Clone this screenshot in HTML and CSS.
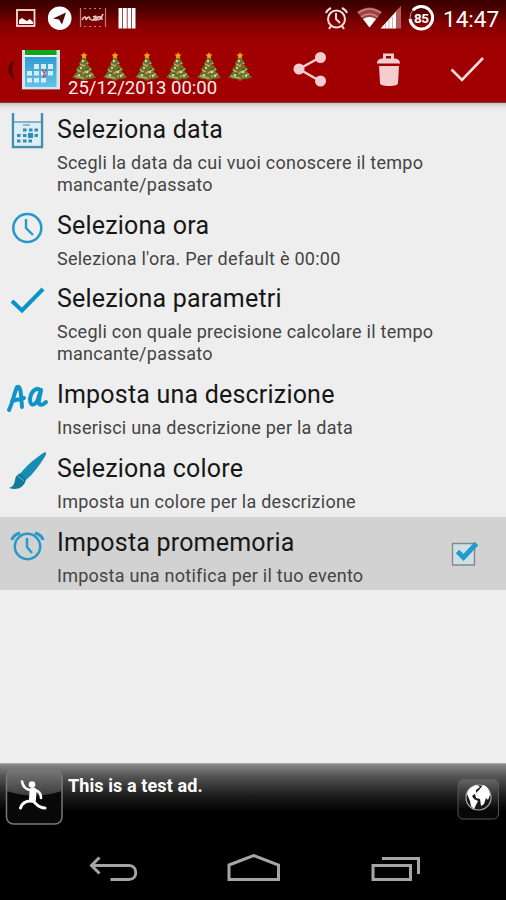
FILE: index.html
```html
<!DOCTYPE html>
<html lang="it">
<head>
<meta charset="utf-8">
<title>Countdown</title>
<link rel="stylesheet" href="styles.css">
</head>
<body>
<svg class="defs" width="0" height="0">
  <defs>
    <linearGradient id="gloss" x1="0" y1="0" x2="0" y2="1"><stop offset="0" stop-color="#777"/><stop offset="1" stop-color="#3c3c3c"/></linearGradient>
    <linearGradient id="dark" x1="0" y1="0" x2="0" y2="1"><stop offset="0" stop-color="#666"/><stop offset=".75" stop-color="#080808"/></linearGradient>
    <linearGradient id="sky" x1="0" y1="0" x2="0" y2="1"><stop offset="0" stop-color="#329bd0"/><stop offset="1" stop-color="#62c3ea"/></linearGradient>
    <symbol id="tree" viewBox="0 0 26 30">
      <path d="M11 24h4v5h-4z" fill="#70451d"/>
      <path d="M13 4L7.500 12l2.500-.5L4.500 18l3-.3L1 25.500c3 .3 5 2 8 1.500 3 1.500 5 1.500 8 0 3 .5 5-1 8-1.500l-6.500-7.800 3 .3-5.500-6.500 2.500.5z" fill="#5f7530"/>
      <path d="M9 12l4 2 4-3M6 18l6 3 8-4M4 24l8 2 10-4" fill="none" stroke="#b9ae5c" stroke-width="1.600"/>
      <path d="M8 16l3 1m4-5l1 1m-9 9l3-1m5-3l3-1m-1 7l3 1" stroke="#304c22" stroke-width="1.300"/>
      <g fill="#e0d28b"><circle cx="12" cy="9" r="1.300"/><circle cx="10" cy="16" r="1.200"/><circle cx="16" cy="20" r="1.300"/><circle cx="8" cy="23" r="1.300"/><circle cx="19" cy="24" r="1.200"/></g>
      <g fill="#b94b22"><circle cx="15" cy="14" r="1.300"/><circle cx="11" cy="20" r="1.200"/><circle cx="14" cy="25" r="1.200"/></g>
      <path d="M13 0l1 2.200 2.500.3-1.800 1.700.5 2.500L13 5.500l-2.200 1.200.5-2.500-1.800-1.700 2.500-.3z" fill="#fca414"/>
    </symbol>
  </defs>
</svg>
<div class="screen">
  <header class="header">
    <div class="status">
      <svg class="left-icons" width="140" height="36" viewBox="0 0 140 36">
        <rect x="17" y="10" width="17.500" height="16" fill="none" stroke="#f4dede" stroke-width="1.800"/>
        <path d="M19 24v-4l3-2 3 2 2 1 3-2 3 3v2z" fill="#fff"/>
        <circle cx="59.700" cy="18.200" r="11.800" fill="#fff"/>
        <path d="M53 18.500l13-6-4 12-3-5z" fill="#4c0d0d"/>
        <path d="M84 8.500h2m3 0h2m3 0h2m3 0h2M84 26.500h2m3 0h2m3 0h2m3 0h2M80.500 8v19M105.500 8v19" fill="none" stroke="#b98080" stroke-width="1.200"/>
        <path d="M82 20c2-4 4-4 4 0 2-4 4-4 4 0m1 0h1m1-3c4-2 4 0 0 3h4m6-6c-2 5-5 7-6 5s5-4 5 1" fill="none" stroke="#ecc9c9" stroke-width="1.600"/>
        <path d="M118.500 8h3.800v20.500h-3.800zm4.500 0h3.800v20.500H123zm4.500 0h3.800v20.500h-3.800zm4.500 0h3.500v20.500H132z" fill="#fff"/>
      </svg>
      <div class="status-right">
        <svg width="112" height="36" viewBox="324 0 112 36">
          <g fill="none" stroke="#f6dddd" stroke-width="2"><circle cx="336.500" cy="19" r="8.500"/><path d="M336 13v6l4 4M326 13c1-3 3-4 5-5m11 0c2 1 4 2 5 5M331 26l-2 3m13-3l2 3"/></g>
          <path d="M357 12c8-6 17-6 25 0l-12.300 15.500z" fill="#9b4444"/>
          <path d="M358 13q11.500-8 23 0M361 17q8.500-6 17 0" fill="none" stroke="#c98585" stroke-width="1.500"/>
          <path d="M363 19q6.700-4 13 0l-6.500 8.500z" fill="#fff"/>
          <path d="M401 6v22.500h-5.500V11.500z" fill="#b46060"/>
          <path d="M380.500 28.500l15.500-17v17z" fill="#fff"/><path d="M385.500 23v6m3.500-9v9m3.500-12v12" stroke="#c88" stroke-width=".7"/>
          <circle cx="421.300" cy="17.700" r="11.300" fill="none" stroke="#d99" stroke-width="1"/>
          <circle cx="421.300" cy="17.700" r="11.300" fill="none" stroke="#fff" stroke-width="3" stroke-dasharray="61 10" transform="rotate(222 421.300 17.700)"/>
          <text class="battery" x="421.300" y="23" text-anchor="middle" fill="#fff">85</text>
        </svg>
        <span class="clock">14:47</span>
      </div>
    </div>
    <div class="actionbar">
      <svg class="app" width="62" height="67" viewBox="0 36 62 67">
        <path d="M14 60c-7 6-7 12 0 19-3-7-3-12 0-19z" fill="#4f0505" stroke="#5b0707"/>
        <path d="M22 50h38v39H22z" fill="#d9e4e8"/><path d="M25 50h31.500v5H25z" fill="#10a51b"/><path d="M25 55h31.500v1.500H25z" fill="#fff"/>
        <path d="M25 57h31.500v30H25z" fill="url(#sky)"/>
        <path d="M34 64h5v5h-5zm7 0h5v5h-5zm7 0h5v5h-5zM27 71h5v4.500h-5zm7 0h5v4.500h-5zm7 0h5v4.500h-5zm7 0h5v4.500h-5zM27 78h5v4.500h-5zm7 0h5v4.500h-5zm7 0h5v4.500h-5z" fill="#d5edf7"/>
        <path d="M42 69l4 8m0-8l-3 9" stroke="#b5525d" stroke-width="1.200"/><path d="M21.500 89.500H60" stroke="#9a6065"/>
      </svg>
      <div class="event">
        <div class="trees">
          <svg><use href="#tree"/></svg><svg><use href="#tree"/></svg><svg><use href="#tree"/></svg><svg><use href="#tree"/></svg><svg><use href="#tree"/></svg><svg><use href="#tree"/></svg>
        </div>
        <div class="date">25/12/2013 00:00</div>
      </div>
      <svg class="actions" width="216" height="67" viewBox="290 36 216 67">
        <g fill="#f3cdd0"><circle cx="299" cy="69" r="5.500"/><circle cx="320.500" cy="57.500" r="5.500"/><circle cx="320.500" cy="81" r="5.500"/></g>
        <path d="M320 57.500L299 69l21 12" fill="none" stroke="#f3cdd0" stroke-width="2.500"/>
        <path d="M383 59v-5.500h11V59h-3v-3h-5v3z" fill="#f3cdd0"/>
        <path d="M377 63.500c0-4 3-5 6-5h11c3 0 6 1 6 5zM379 66h20l-1 17c0 2-3 3-9 3s-9-1-9-3z" fill="#f3cdd0"/>
        <path d="M451.500 69.500L462 80l21-22" fill="none" stroke="#f8dcdc" stroke-width="2.600"/>
      </svg>
    </div>
  </header>

  <main class="list">
    <section class="row">
      <svg class="icon" viewBox="0 0 54 74"><path d="M13 10v34h29V10" fill="none" stroke="#418ead" stroke-width="2.400"/><path d="M14.500 19h26v23.500h-26z" fill="#dceef3"/><path d="M14 19h27" stroke="#418ead" stroke-width="1.200"/><path d="M23 22h7" stroke="#6eaac0" stroke-width="1.500"/><path d="M23 25.500h3.500v3H23zm6 0h3.500v3H29zm5.500 0H38v3h-3.500zM17 31h3.500v3H17zm6 0h3.500v3H23zm5-1h5v5h-5zm6.500 1H38v3h-3.500zM17 36.500h3.500v3H17zm6 0h3.500v3H23zm5.500 0H32v3h-3.500z" fill="#308db3"/></svg>
      <div class="copy"><h2>Seleziona data</h2><p>Scegli la data da cui vuoi conoscere il tempo<br>mancante/passato</p></div>
    </section>
    <section class="row">
      <svg class="icon" viewBox="0 0 54 74"><g fill="none" stroke="#2799c8"><circle cx="27.300" cy="29" r="14" stroke-width="2.600"/><path d="M26 20v9l7 7" stroke-width="2.400"/></g></svg>
      <div class="copy"><h2>Seleziona ora</h2><p>Seleziona l'ora. Per default è 00:00</p></div>
    </section>
    <section class="row">
      <svg class="icon" viewBox="0 0 54 74"><path d="M12 29l10 9.500L43 17" fill="none" stroke="#0994c9" stroke-width="4"/></svg>
      <div class="copy"><h2>Seleziona parametri</h2><p>Scegli con quale precisione calcolare il tempo<br>mancante/passato</p></div>
    </section>
    <section class="row">
      <svg class="icon" viewBox="0 0 54 74"><path d="M9 42C13 34 14 26 17 19c4-2 4 8 5 20M12 33l12-3M41 23c-4-5-10 0-11 8 0 8 5 7 8 0l3-9-2 10c-1 6 3 6 7 2" fill="none" stroke="#1094c8" stroke-width="4" stroke-linecap="round" stroke-linejoin="round"/></svg>
      <div class="copy"><h2>Imposta una descrizione</h2><p>Inserisci una descrizione per la data</p></div>
    </section>
    <section class="row">
      <svg class="icon" viewBox="0 0 54 74"><path d="M45 10c2 1 1 3-1 6-5 8-11 16-18 22l-6-6C27 23 34 17 45 10z" fill="#168db5"/><path d="M20 31l6 6c-1 7-7 12-17 9 5-2 5-4 6-8 1-5 3-5 5-7z" fill="#117b9f"/><path d="M18 34l6 5" stroke="#6fb2c8" stroke-width="1"/></svg>
      <div class="copy"><h2>Seleziona colore</h2><p>Imposta un colore per la descrizione</p></div>
    </section>
    <section class="row selected">
      <svg class="icon" viewBox="0 0 54 74"><g fill="none" stroke="#2799c8"><circle cx="27.500" cy="30.500" r="12.700" stroke-width="2.500"/><path d="M27 22v9l5 6" stroke-width="2.400"/><path d="M12 24c1-4 4-6 8-7m15 0c4 1 7 3 8 7" stroke-width="3"/></g></svg>
      <div class="copy"><h2>Imposta promemoria</h2><p>Imposta una notifica per il tuo evento</p></div>
      <svg class="check" width="30" height="30" viewBox="450 539 30 30"><path d="M452.500 544.500h22v21.500h-22z" fill="#d0dfe5" stroke="#888" stroke-width="1.400"/><path d="M457.500 552.500l6 6L476.500 544.500" fill="none" stroke="#219bcd" stroke-width="4.800"/></svg>
    </section>
  </main>

  <footer class="ad">
    <svg class="runner" width="58" height="58" viewBox="5 768 58 58">
      <rect x="6.500" y="769" width="55.500" height="54" rx="7" fill="#080808"/>
      <path d="M6.500 776q0-7 7-7H55q7 0 7 7v14q-28 9-55.500 0z" fill="url(#gloss)"/>
      <rect x="6.500" y="769" width="55.500" height="54" rx="7" fill="none" stroke="#777" stroke-width="1.500"/>
      <circle cx="32" cy="783.500" r="3.300" fill="#fff"/>
      <g fill="none" stroke="#fff" stroke-linecap="round" stroke-linejoin="round"><path d="M22 780.500c1 5 4 8 8 8.500h5c4 1 6 4 6 8" stroke-width="2.600"/><path d="M33 790l-.5 8" stroke-width="7"/><path d="M31 800c-5 0-9 2-10.500 7M33 800c4 3 5 7 12 7" stroke-width="3"/></g>
    </svg>
    <span>This is a test ad.</span>
    <svg class="globe" width="42" height="42" viewBox="457 778 42 42">
      <rect x="458" y="779" width="40.500" height="40" rx="5" fill="url(#dark)" stroke="#555"/>
      <circle cx="478.500" cy="797.500" r="12.500" fill="#181818" stroke="#aaa" stroke-width="1.200"/>
      <path d="M467 794c1-5 5-8 10-9l3 2-4 3v3l-4 3 2 3 4 2-2 4-2 4-3-3-1-5zM479 790l4-5c4 1 7 5 7 10l-2 5-2-2-2 6-3 2-1-7-4-1-1-4z" fill="#fff"/>
    </svg>
  </footer>
  <nav class="nav">
    <svg width="506" height="70" viewBox="0 830 506 70" fill="none" stroke="#a5a5a5" stroke-width="3">
      <path d="M99.500 857.500L91.500 865.500l8 8M92 865.500h37c9 0 9 14 0 14h-18.500"/>
      <path d="M229 865l24.500-9.500L278.500 865v14.500H229z"/>
      <path d="M373 865.500h37.500v14H373zM382 858.500h36.500V874"/>
    </svg>
  </nav>
</div>
</body>
</html>
```

FILE: styles.css
```css
* { box-sizing: border-box; }
body { margin: 0; background: #000; font-family: Roboto, sans-serif; }
.defs { position: absolute; }
.screen { width: 506px; height: 900px; display: flex; flex-direction: column; overflow: hidden; background: #eee; }
svg { display: block; flex: none; }

.header { height: 103px; flex: none; background: linear-gradient(#370000 0, #500000 10px, #850000 25px, #a00000 42px, #a00000); border-bottom: 1px solid #8b3434; }
.status { height: 36px; display: flex; justify-content: space-between; }
.status-right { display: flex; }
.battery { font: 700 13.5px Roboto, sans-serif; letter-spacing: -.5px; }
.clock { width: 70px; padding-left: 7px; font-size: 22.5px; line-height: 38px; color: #fff; white-space: nowrap; }
.actionbar { height: 66px; display: flex; }
.event { width: 228px; padding: 16px 0 0 6px; }
.trees { display: flex; gap: 5.3px; height: 30px; padding-left: 3px; }
.trees svg { width: 26px; height: 30px; }
.date { position: relative; margin-top: -4px; font-size: 18.5px; line-height: 20px; color: #ffecec; white-space: nowrap; }

.list { flex: 1; padding-top: 1px; background: linear-gradient(#c4c4c4 0, #e4e4e4 4px, #eee 9px); }
.row { display: flex; padding-bottom: 4px; }
.icon { width: 54px; height: 74px; margin: -1px 0 -4px; overflow: visible; }
.copy { flex: 1; padding: 11px 0 0 3px; }
h2 { margin: 0; font-size: 25px; font-weight: 400; line-height: 30px; letter-spacing: .2px; color: #171717; white-space: nowrap; }
p { margin: 7px 0 0; font-size: 18px; line-height: 21.8px; letter-spacing: .25px; color: #444; white-space: nowrap; }
.selected { background: #d2d2d2; }
.check { margin: 21px 26px 0 0; }

.ad { height: 67px; flex: none; display: flex; padding: 5px 7px 0 5px; border-top: 1px solid #aaa; background: linear-gradient(#888, #555 12px, #202020 30px, #000 48px); color: #fff; font-size: 18px; font-weight: 700; letter-spacing: .1px; }
.ad span { flex: 1; padding: 6px 0 0 5px; line-height: 22px; }
.globe { margin-top: 9px; }
.nav { height: 70px; flex: none; background: #000; }
```
